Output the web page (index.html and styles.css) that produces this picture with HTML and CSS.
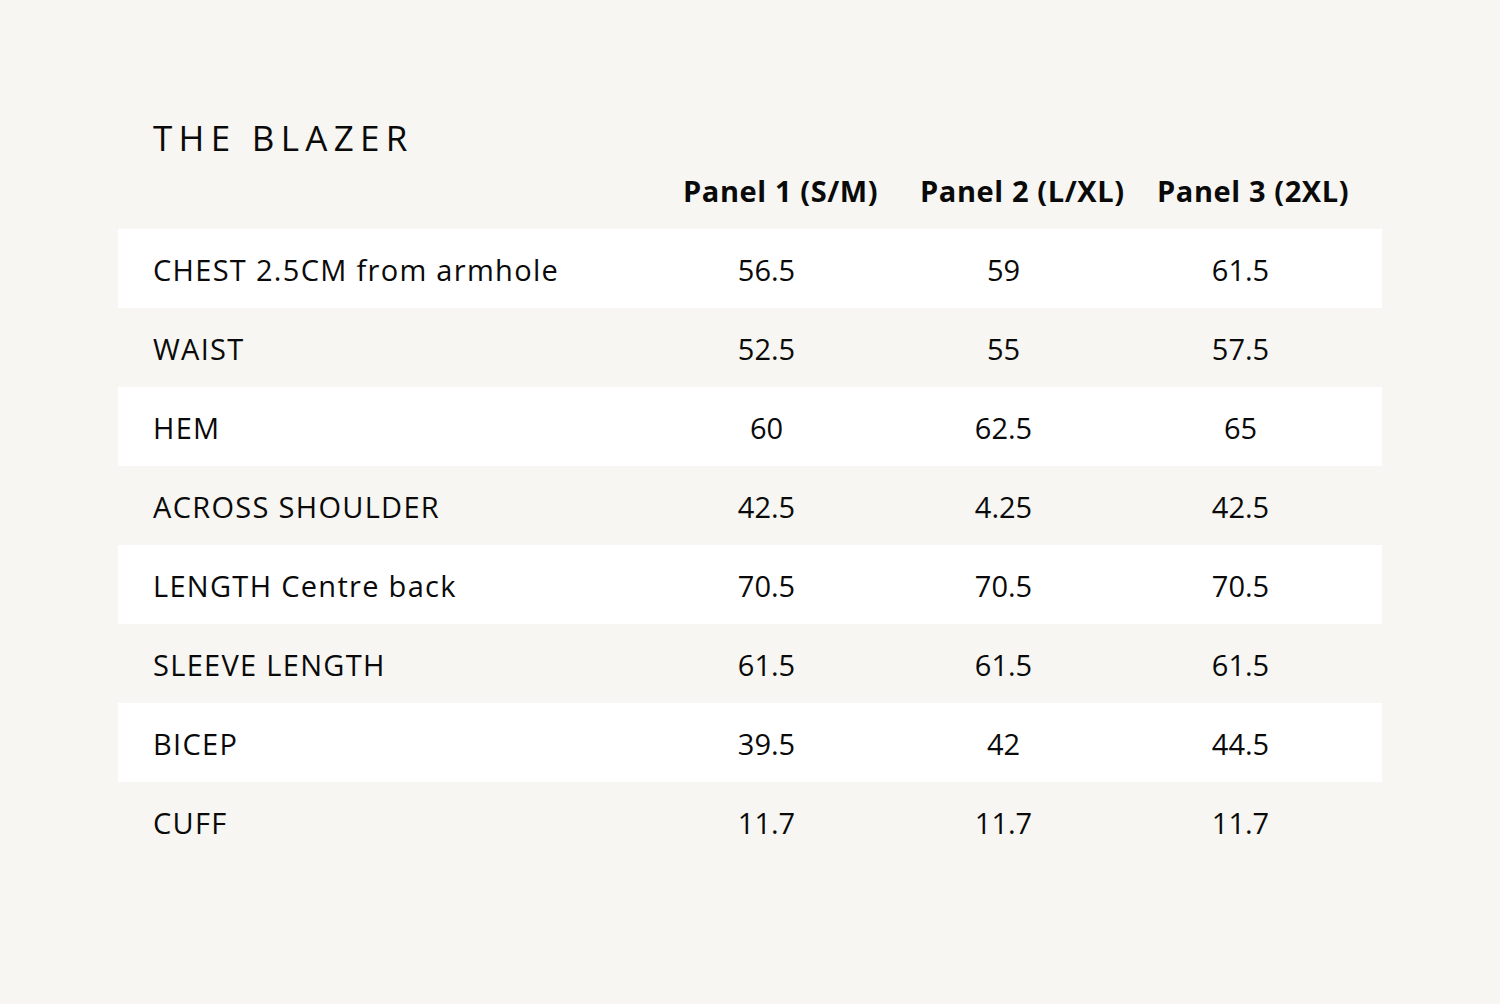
FILE: index.html
```html
<!DOCTYPE html>
<html lang="en">
<head>
<meta charset="utf-8">
<title>The Blazer — Size Chart</title>
<link rel="stylesheet" href="styles.css">
</head>
<body>
<main class="chart">
  <h1 class="title">THE BLAZER</h1>
  <div class="row head">
    <div class="cell label"></div>
    <div class="cell col-head">Panel 1 (S/M)</div>
    <div class="cell col-head">Panel 2 (L/XL)</div>
    <div class="cell col-head">Panel 3 (2XL)</div>
  </div>
  <div class="row light">
    <div class="cell label">CHEST 2.5CM from armhole</div>
    <div class="cell val">56.5</div><div class="cell val">59</div><div class="cell val">61.5</div>
  </div>
  <div class="row">
    <div class="cell label">WAIST</div>
    <div class="cell val">52.5</div><div class="cell val">55</div><div class="cell val">57.5</div>
  </div>
  <div class="row light">
    <div class="cell label">HEM</div>
    <div class="cell val">60</div><div class="cell val">62.5</div><div class="cell val">65</div>
  </div>
  <div class="row">
    <div class="cell label">ACROSS SHOULDER</div>
    <div class="cell val">42.5</div><div class="cell val">4.25</div><div class="cell val">42.5</div>
  </div>
  <div class="row light">
    <div class="cell label">LENGTH Centre back</div>
    <div class="cell val">70.5</div><div class="cell val">70.5</div><div class="cell val">70.5</div>
  </div>
  <div class="row">
    <div class="cell label">SLEEVE LENGTH</div>
    <div class="cell val">61.5</div><div class="cell val">61.5</div><div class="cell val">61.5</div>
  </div>
  <div class="row light">
    <div class="cell label">BICEP</div>
    <div class="cell val">39.5</div><div class="cell val">42</div><div class="cell val">44.5</div>
  </div>
  <div class="row">
    <div class="cell label">CUFF</div>
    <div class="cell val">11.7</div><div class="cell val">11.7</div><div class="cell val">11.7</div>
  </div>
</main>
</body>
</html>
```
FILE: styles.css
```css
html, body {
  margin: 0;
  padding: 0;
  background: #f7f6f2;
}
body {
  font-family: "Open Sans", "Liberation Sans", sans-serif;
  color: #0a0a0a;
}
.chart {
  width: 1264px;
  margin-left: 118px;
  padding-top: 120px;
}
.title {
  margin: 0;
  padding-left: 35px;
  font-size: 35px;
  line-height: 35px;
  font-weight: 400;
  letter-spacing: 0.18em;
}
.row {
  display: grid;
  grid-template-columns: 530px 237px 237px 237px 1fr;
  height: 79px;
  align-items: center;
  font-size: 29px;
}
.row.light {
  background: #ffffff;
}
.row.head {
  height: 74px;
  align-items: start;
}
.cell {
  white-space: nowrap;
  padding-top: 2px;
}
.label {
  padding-left: 35px;
  letter-spacing: 1.3px;
}
.val {
  text-align: center;
}
.col-head {
  padding-top: 21px;
  padding-left: 35px;
  font-weight: 700;
  line-height: 29px;
  letter-spacing: 0.6px;
}
```
